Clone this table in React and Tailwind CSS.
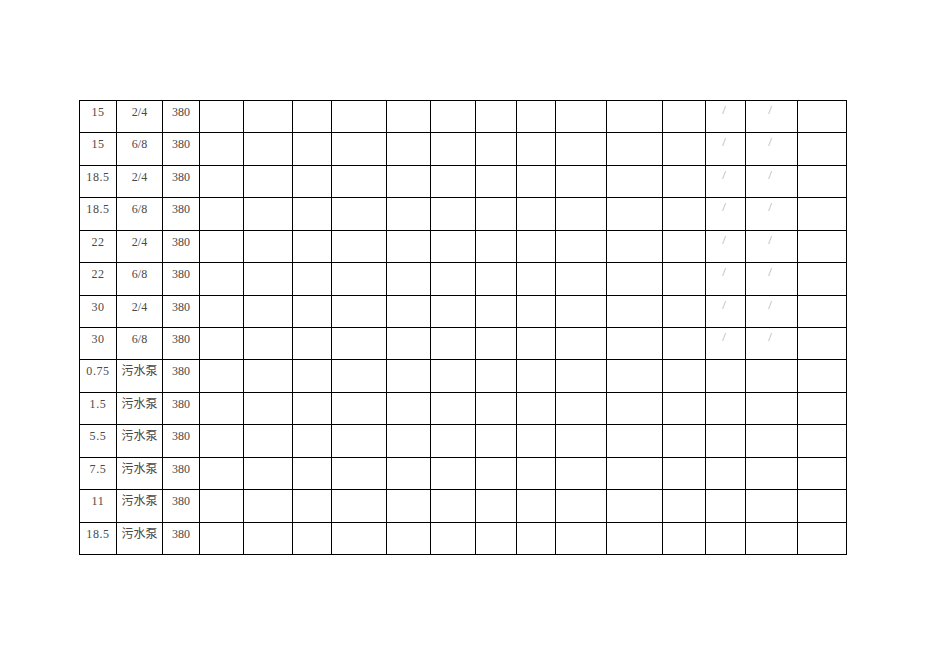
import React from "react";

const rows = [
  ["15", "2/4", true],
  ["15", "6/8", true],
  ["18.5", "2/4", true],
  ["18.5", "6/8", true],
  ["22", "2/4", true],
  ["22", "6/8", true],
  ["30", "2/4", true],
  ["30", "6/8", true],
  ["0.75", "污水泵", false],
  ["1.5", "污水泵", false],
  ["5.5", "污水泵", false],
  ["7.5", "污水泵", false],
  ["11", "污水泵", false],
  ["18.5", "污水泵", false],
];

export default function App() {
  const cells = [];
  rows.forEach((r, i) => {
    for (let c = 0; c < 17; c++) {
      let content = null;
      let cls = "text-[#4a4a4a] text-[12px] pt-[4px]";
      if (c === 0) {
        content = r[0];
        cls += " tracking-[0.6px]";
      } else if (c === 1) content = r[1];
      else if (c === 2) content = "380";
      else if ((c === 14 || c === 15) && r[2]) {
        content = "/";
        cls = "text-[#aaa] text-[13px] pt-[2px] pr-[3px]";
      }
      cells.push(
        <div
          key={i + "-" + c}
          className={"border-r border-b border-black text-center leading-[14px] whitespace-nowrap " + cls}
        >
          {content}
        </div>
      );
    }
  });
  return (
    <div className="w-[936px] h-[662px] bg-white pt-[100px] pl-[79px]" style={{ fontFamily: '"Liberation Serif", "Noto Sans CJK SC", serif' }}>
      <div className="grid w-[768px] h-[455px] border-l border-t border-black grid-cols-[37px_46px_37px_44px_49px_39px_55px_44px_45px_41px_39px_51px_56px_43px_40px_52px_49px] grid-rows-[repeat(14,minmax(0,1fr))]">
        {cells}
      </div>
    </div>
  );
}
